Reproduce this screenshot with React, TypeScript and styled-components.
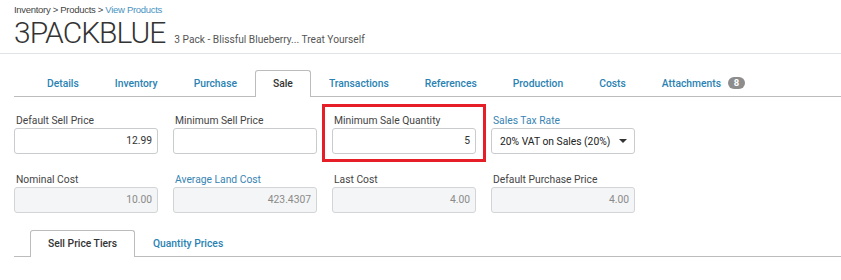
import React from "react";
import styled, { createGlobalStyle } from "styled-components";

const GlobalStyle = createGlobalStyle`
  body {
    margin: 0;
    background: #fff;
    font-family: Roboto, "Liberation Sans", Arial, sans-serif;
    color: #333;
  }
`;

const Page = styled.div`
  width: 841px;
`;

const Header = styled.div`
  padding: 4px 14px 2px;
  border-bottom: 1px solid #e1e5e8;
`;

const Breadcrumb = styled.div`
  font-family: "Liberation Sans", Arial, sans-serif;
  font-size: 9.5px;
  letter-spacing: -0.3px;
  line-height: 12px;
  color: #444;
`;

const Crumb = styled.span<{ $current?: boolean }>`
  color: ${(p) => (p.$current ? "#4a93c0" : "#444")};
`;

const TitleRow = styled.div`
  display: flex;
  align-items: baseline;
  gap: 9px;
  margin-top: -1px;
`;

const Title = styled.h1`
  margin: 0;
  font-size: 30px;
  line-height: 36px;
  font-weight: 300;
  letter-spacing: -1px;
  color: #333;
`;

const Subtitle = styled.span`
  font-size: 10.2px;
  color: #555;
`;

const Content = styled.div`
  padding: 16px 0 0 14px;
`;

const TabBar = styled.div<{ $inset: number }>`
  display: flex;
  padding-left: ${(p) => p.$inset}px;
  border-bottom: 1px solid #bcbcbc;
`;

const Tab = styled.div<{ $active?: boolean }>`
  display: flex;
  align-items: center;
  box-sizing: border-box;
  height: 27px;
  margin-bottom: -1px;
  padding: 0 17px 2px;
  border: 1px solid ${(p) => (p.$active ? "#bcbcbc" : "transparent")};
  border-bottom: none;
  border-radius: 3px 3px 0 0;
  background: ${(p) => (p.$active ? "#fff" : "transparent")};
  font-size: 10.3px;
  font-weight: 500;
  color: ${(p) => (p.$active ? "#333" : "#2a82b3")};
`;

const Badge = styled.span`
  margin-left: 7px;
  min-width: 17px;
  height: 12px;
  line-height: 12px;
  padding: 0 5px;
  box-sizing: border-box;
  border-radius: 6px;
  background: #8d8d8d;
  color: #fff;
  font-size: 9.5px;
  font-weight: 700;
  text-align: center;
`;

const FieldGrid = styled.div`
  display: grid;
  grid-template-columns: repeat(4, 144px);
  column-gap: 15px;
  row-gap: 19px;
  margin: 17px 0;
`;

const Field = styled.div<{ $highlight?: boolean }>`
  position: relative;
  &::after {
    content: "";
    display: ${(p) => (p.$highlight ? "block" : "none")};
    position: absolute;
    top: -10px;
    left: -10px;
    right: -10px;
    bottom: -8px;
    border: 3px solid #e61e27;
    pointer-events: none;
  }
`;

const Label = styled.div<{ $link?: boolean }>`
  padding-left: 2px;
  font-size: 10.3px;
  line-height: 14px;
  color: ${(p) => (p.$link ? "#3784b3" : "#444")};
`;

const Input = styled.div<{ $disabled?: boolean }>`
  box-sizing: border-box;
  height: 26px;
  padding: 0 5px;
  border: 1px solid ${(p) => (p.$disabled ? "#d2d4d6" : "#c9cbcd")};
  border-radius: 3px;
  background: ${(p) => (p.$disabled ? "#f4f5f6" : "#fff")};
  color: ${(p) => (p.$disabled ? "#8a8a8a" : "#333")};
  font-size: 10.3px;
  line-height: 24px;
  text-align: right;
`;

const Select = styled.div`
  display: flex;
  align-items: center;
  justify-content: space-between;
  box-sizing: border-box;
  height: 26px;
  padding: 0 7px 0 8px;
  border: 1px solid #c9cbcd;
  border-radius: 3px;
  font-size: 10.3px;
  white-space: nowrap;
  color: #222;
`;

const Caret = styled.span`
  width: 0;
  height: 0;
  border-left: 4px solid transparent;
  border-right: 4px solid transparent;
  border-top: 4px solid #333;
`;

const mainTabs = [
  "Details",
  "Inventory",
  "Purchase",
  "Sale",
  "Transactions",
  "References",
  "Production",
  "Costs",
];

export default function App() {
  return (
    <Page>
      <GlobalStyle />
      <Header>
        <Breadcrumb>
          <Crumb>Inventory</Crumb> &gt; <Crumb>Products</Crumb> &gt;{" "}
          <Crumb $current>View Products</Crumb>
        </Breadcrumb>
        <TitleRow>
          <Title>3PACKBLUE</Title>
          <Subtitle>3 Pack - Blissful Blueberry... Treat Yourself</Subtitle>
        </TitleRow>
      </Header>
      <Content>
        <TabBar $inset={15}>
          {mainTabs.map((t) => (
            <Tab key={t} $active={t === "Sale"}>
              {t}
            </Tab>
          ))}
          <Tab>
            Attachments<Badge>8</Badge>
          </Tab>
        </TabBar>

        <FieldGrid>
          <Field>
            <Label>Default Sell Price</Label>
            <Input>12.99</Input>
          </Field>
          <Field>
            <Label>Minimum Sell Price</Label>
            <Input />
          </Field>
          <Field $highlight>
            <Label>Minimum Sale Quantity</Label>
            <Input>5</Input>
          </Field>
          <Field>
            <Label $link>Sales Tax Rate</Label>
            <Select>
              20% VAT on Sales (20%)
              <Caret />
            </Select>
          </Field>
          <Field>
            <Label>Nominal Cost</Label>
            <Input $disabled>10.00</Input>
          </Field>
          <Field>
            <Label $link>Average Land Cost</Label>
            <Input $disabled>423.4307</Input>
          </Field>
          <Field>
            <Label>Last Cost</Label>
            <Input $disabled>4.00</Input>
          </Field>
          <Field>
            <Label>Default Purchase Price</Label>
            <Input $disabled>4.00</Input>
          </Field>
        </FieldGrid>

        <TabBar $inset={16}>
          <Tab $active>Sell Price Tiers</Tab>
          <Tab>Quantity Prices</Tab>
        </TabBar>
      </Content>
    </Page>
  );
}
